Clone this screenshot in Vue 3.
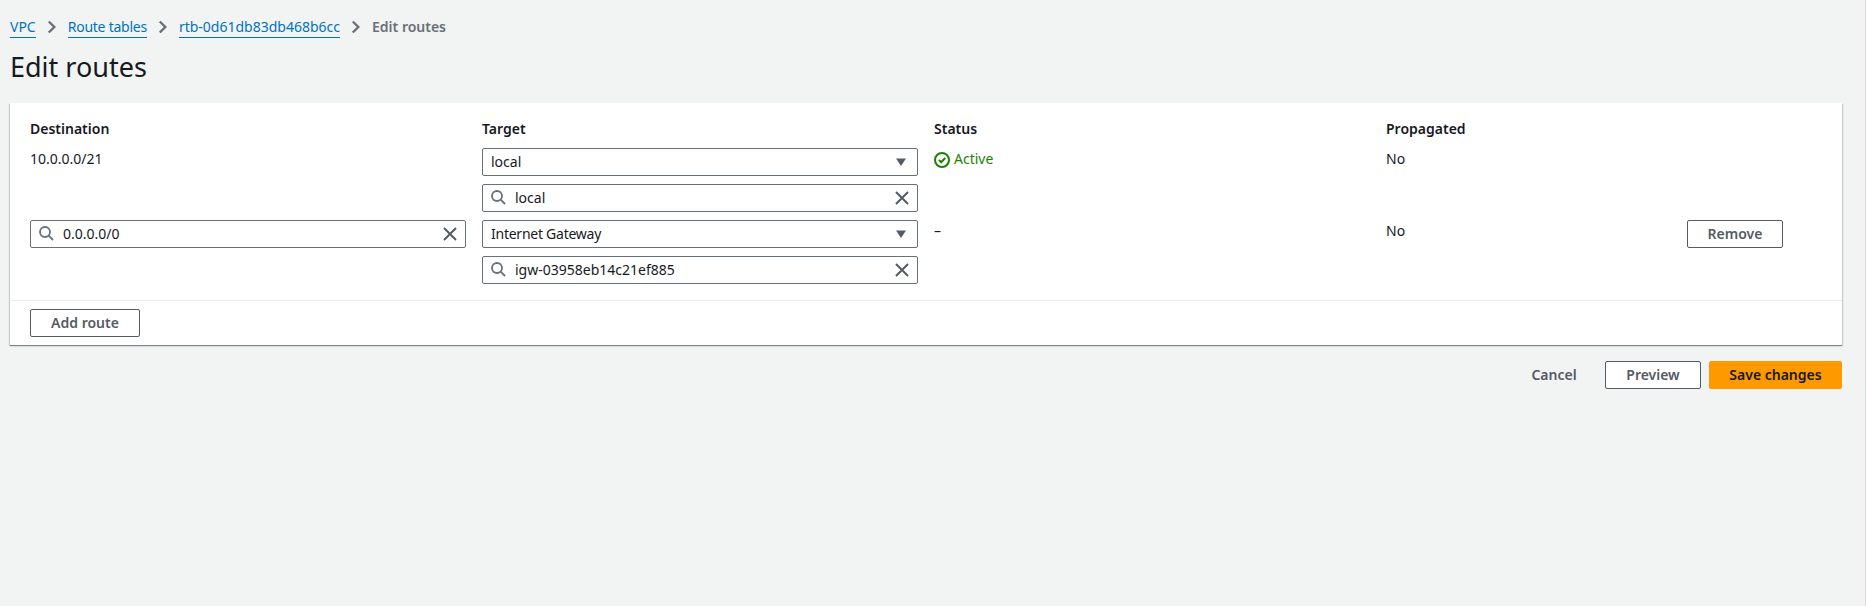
<template>
  <div class="page">
    <nav class="crumbs">
      <template v-for="c in crumbs" :key="c.label">
        <a class="crumb" :class="c.cls">{{ c.label }}</a>
        <svg class="chev" width="16" height="16" viewBox="0 0 16 16"><path d="M4.800 2.500 10.300 8l-5.500 5.500" /></svg>
      </template>
      <span class="crumb-current">Edit routes</span>
    </nav>
    <h1>Edit routes</h1>

    <section class="card">
      <div class="routes">
        <div class="head">Destination</div>
        <div class="head">Target</div>
        <div class="head">Status</div>
        <div class="head">Propagated</div>
        <div></div>

        <div class="cell text">10.0.0.0/21</div>
        <div class="stack">
          <div class="field select">
            <span class="value">local</span>
            <svg class="caret" width="16" height="16" viewBox="0 0 16 16"><path d="M3 4.500h10L8 12z" /></svg>
          </div>
          <div class="field">
            <svg class="search" width="16" height="16" viewBox="0 0 16 16"><circle cx="6" cy="6" r="5" /><path d="m9.700 9.700 4.300 4.300" /></svg>
            <span class="value">local</span>
            <svg class="clear" width="16" height="16" viewBox="0 0 16 16"><path d="m2 2 12 12M14 2 2 14" /></svg>
          </div>
        </div>
        <div class="cell active">
          <svg class="ok" width="16" height="16" viewBox="0 0 16 16"><circle cx="8" cy="8" r="7" /><path d="m5 8 2.200 2.200L11.200 6" /></svg>
          Active
        </div>
        <div class="cell text">No</div>
        <div></div>

        <div class="field">
          <svg class="search" width="16" height="16" viewBox="0 0 16 16"><circle cx="6" cy="6" r="5" /><path d="m9.700 9.700 4.300 4.300" /></svg>
          <span class="value">0.0.0.0/0</span>
          <svg class="clear" width="16" height="16" viewBox="0 0 16 16"><path d="m2 2 12 12M14 2 2 14" /></svg>
        </div>
        <div class="stack">
          <div class="field select">
            <span class="value tight">Internet Gateway</span>
            <svg class="caret" width="16" height="16" viewBox="0 0 16 16"><path d="M3 4.500h10L8 12z" /></svg>
          </div>
          <div class="field">
            <svg class="search" width="16" height="16" viewBox="0 0 16 16"><circle cx="6" cy="6" r="5" /><path d="m9.700 9.700 4.300 4.300" /></svg>
            <span class="value">igw-03958eb14c21ef885</span>
            <svg class="clear" width="16" height="16" viewBox="0 0 16 16"><path d="m2 2 12 12M14 2 2 14" /></svg>
          </div>
        </div>
        <div class="cell text">–</div>
        <div class="cell text">No</div>
        <button class="btn remove">Remove</button>
      </div>
      <div class="card-foot">
        <button class="btn add">Add route</button>
      </div>
    </section>

    <div class="actions">
      <button class="btn link">Cancel</button>
      <button class="btn preview">Preview</button>
      <button class="btn primary">Save changes</button>
    </div>
  </div>
</template>

<script setup>
const crumbs = [
  { label: 'VPC' },
  { label: 'Route tables', cls: 'tight' },
  { label: 'rtb-0d61db83db468b6cc' }
]
</script>

<style>
html,
body {
  margin: 0;
  background: #f2f3f3;
}
</style>

<style scoped>
.page {
  box-sizing: border-box;
  height: 606px;
  padding: 16px 23px 0 10px;
  background: #f2f3f3;
  border-right: 1px solid #d5dbdb;
  font-family: "Noto Sans", "Open Sans", sans-serif;
  font-size: 14px;
  line-height: 22px;
  color: #16191f;
}

.crumbs {
  display: flex;
  align-items: center;
  height: 22px;
}

.crumb {
  color: #0073bb;
  border-bottom: 1px solid #0073bb;
  line-height: 20px;
}

.tight {
  letter-spacing: -0.25px;
}

.chev {
  margin: 0 8px;
  flex: none;
}

.chev path {
  fill: none;
  stroke: #687078;
  stroke-width: 2.400;
}

.crumb-current {
  color: #687078;
  font-weight: 600;
}

h1 {
  margin: 9px 0 0;
  font-size: 27px;
  font-weight: 400;
  line-height: 40px;
}

.card {
  margin-top: 16px;
  background: #fff;
  box-shadow: 0 1px 1px 0 rgba(0, 28, 36, 0.3), 1px 1px 1px 0 rgba(0, 28, 36, 0.15), -1px 1px 1px 0 rgba(0, 28, 36, 0.15);
}

.routes {
  display: grid;
  grid-template-columns: 436px 436px 436px 285px 96px;
  column-gap: 16px;
  row-gap: 8px;
  padding: 15px 20px 16px;
  border-bottom: 1px solid #eaeded;
}

.head {
  font-weight: 600;
  line-height: 22px;
}

.stack {
  display: flex;
  flex-direction: column;
  gap: 8px;
}

.field {
  box-sizing: border-box;
  display: flex;
  align-items: center;
  height: 28px;
  padding: 0 7px 0 8px;
  background: #fff;
  border: 1px solid #687078;
  border-radius: 2px;
}

.value {
  flex: 1;
  margin-top: -1px;
  line-height: 22px;
}

.search {
  margin-right: 8px;
}

.search circle,
.search path {
  fill: none;
  stroke: #687078;
  stroke-width: 1.800;
}

.clear path {
  fill: none;
  stroke: #545b64;
  stroke-width: 2;
}

.caret {
  margin-right: 1px;
}

.caret path {
  fill: #545b64;
}

.cell {
  line-height: 22px;
}

.active {
  display: flex;
  align-items: center;
  gap: 4px;
  height: 22px;
  color: #1d8102;
}

.ok {
  margin-top: 1px;
}

.ok circle,
.ok path {
  fill: none;
  stroke: #1d8102;
  stroke-width: 2;
}

.btn {
  box-sizing: border-box;
  height: 28px;
  padding: 0;
  background: #fff;
  border: 1px solid #545b64;
  border-radius: 2px;
  color: #545b64;
  font: 600 14px/22px "Noto Sans", "Open Sans", sans-serif;
}

.remove {
  width: 96px;
}

.card-foot {
  padding: 8px 20px 8px;
}

.add {
  display: block;
  width: 110px;
}

.actions {
  display: flex;
  justify-content: flex-end;
  align-items: center;
  gap: 8px;
  margin-top: 16px;
}

.link {
  width: 86px;
  background: transparent;
  border-color: transparent;
}

.preview {
  width: 96px;
}

.primary {
  width: 133px;
  background: #ff9900;
  border-color: #ff9900;
  color: #16191f;
}
</style>
